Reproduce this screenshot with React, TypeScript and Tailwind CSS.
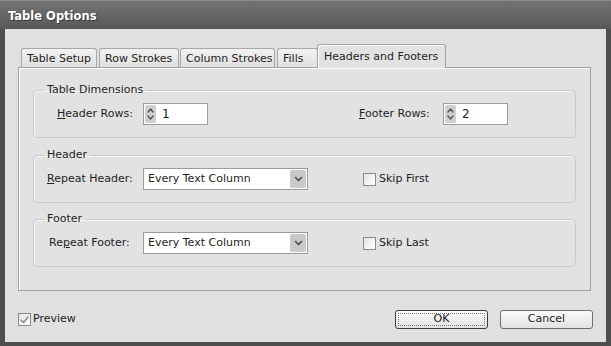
import React from 'react';

const Tab = ({ label, w, active = false, ml = 0 }: { label: string; w: number; active?: boolean; ml?: number }) => (
  <div
    style={{ width: w, marginLeft: ml }}
    className={
      active
        ? 'relative z-10 -mb-px h-[24px] rounded-t-[3px] border border-b-0 border-[#a2a2a2] bg-[#e2e2e2] shadow-[inset_1px_1px_0_#ffffff] pl-[6px] pt-[4px] text-[#1e1e1e]'
        : 'h-[19px] rounded-t-[3px] border border-b-0 border-[#a8a8a8] bg-gradient-to-b from-[#f2f2f2] to-[#e0e0e0] pl-[5px] pt-[2px] text-[#1e1e1e]'
    }
  >
    {label}
  </div>
);

const Spinner = ({ value }: { value: string }) => (
  <div className="flex h-[22px] w-[65px] items-center border border-[#9c9c9c] bg-white pl-[1px]">
    <div className="flex h-[18px] w-[11px] flex-col items-center justify-center rounded-[2px] bg-[#cfcfcf]">
      <svg width="9" height="16" viewBox="0 0 9 16" fill="none" stroke="#555" strokeWidth="1.4" strokeLinecap="round" strokeLinejoin="round">
        <path d="M2 6 L4.5 3 L7 6" />
        <path d="M2 10 L4.5 13 L7 10" />
      </svg>
    </div>
    <span className="ml-[6px] text-[12px]">{value}</span>
  </div>
);

const Select = () => (
  <div className="flex h-[22px] w-[165px] items-center border border-[#9c9c9c] bg-white">
    <span className="flex-1 pl-[4px] text-[11px]">Every Text Column</span>
    <div className="mr-[1px] flex h-[18px] w-[16px] items-center justify-center rounded-[2px] bg-[#c9c9c9]">
      <svg width="9" height="6" viewBox="0 0 9 6" fill="none" stroke="#4a4a4a" strokeWidth="1.6" strokeLinecap="round" strokeLinejoin="round">
        <path d="M1.5 1.5 L4.5 4.5 L7.5 1.5" />
      </svg>
    </div>
  </div>
);

const Check = ({ checked = false }: { checked?: boolean }) => (
  <div className="flex h-[13px] w-[13px] items-center justify-center border border-[#8a8a8a] bg-gradient-to-br from-[#e4e4e4] to-[#ffffff]">
    {checked && (
      <svg width="9" height="8" viewBox="0 0 9 8" fill="none" stroke="#8a8a8a" strokeWidth="1.6" strokeLinecap="round" strokeLinejoin="round">
        <path d="M1 4 L3.5 6.5 L8 1" />
      </svg>
    )}
  </div>
);

const Group = ({ title, children, className = '' }: { title: string; children: React.ReactNode; className?: string }) => (
  <fieldset className={`rounded-[4px] border border-[#cbcbcb] shadow-[inset_1px_1px_0_#f4f4f4] ${className}`}>
    <legend className="ml-[10px] px-[3px] leading-[14px]">{title}</legend>
    {children}
  </fieldset>
);

export default function App() {
  return (
    <div className="flex h-[346px] w-[611px] flex-col bg-[#4e4e4e] px-[5px] pb-[4px] font-['DejaVu_Sans',sans-serif] text-[11px] text-[#1e1e1e]">
      {/* Title bar */}
      <div className="-mx-[5px] flex h-[29px] items-center border-t border-[#8a8a8a] bg-gradient-to-b from-[#737373] to-[#585858] pl-[8px] pt-[4px] text-[11.5px] font-bold text-white [text-shadow:1px_1px_0_#3a3a3a]">
        Table Options
      </div>

      <div className="flex flex-1 flex-col bg-[#e0e0e0] pl-[13px] pr-[13px]">
        {/* Tabs */}
        <div className="mt-[15px] flex items-end pl-[3px]">
          <Tab label="Table Setup" w={76} />
          <Tab label="Row Strokes" w={80} ml={2} />
          <Tab label="Column Strokes" w={95} ml={1} />
          <Tab label="Fills" w={41} ml={2} />
          <Tab label="Headers and Footers" w={129} active ml={-1} />
        </div>

        {/* Panel */}
        <div className="mr-[2px] flex h-[224px] flex-col border border-[#a2a2a2] bg-[#e2e2e2] px-[14px] pt-[15px] shadow-[inset_1px_1px_0_#ffffff]">
          <Group title="Table Dimensions">
            <div className="flex items-center pl-[23px] pt-[6px] pb-[12px]">
              <span className="w-[86px]"><u>H</u>eader Rows:</span>
              <Spinner value="1" />
              <span className="ml-[151px] w-[84px]"><u>F</u>ooter Rows:</span>
              <Spinner value="2" />
            </div>
          </Group>

          <Group title="Header" className="mt-[10px]">
            <div className="flex items-center pl-[13px] pt-[6px] pb-[12px]">
              <span className="w-[96px]"><u>R</u>epeat Header:</span>
              <Select />
              <div className="ml-[55px] flex items-center gap-[3px]">
                <Check />
                <span>Skip First</span>
              </div>
            </div>
          </Group>

          <Group title="Footer" className="mt-[9px]">
            <div className="flex items-center pl-[15px] pt-[6px] pb-[12px]">
              <span className="w-[94px]">Re<u>p</u>eat Footer:</span>
              <Select />
              <div className="ml-[55px] flex items-center gap-[3px]">
                <Check />
                <span>Skip Last</span>
              </div>
            </div>
          </Group>
        </div>

        {/* Bottom row */}
        <div className="mt-[19px] flex items-center">
          <div className="flex items-center gap-[2px]">
            <Check checked />
            <span>Preview</span>
          </div>
          <div className="ml-auto flex gap-[12px]">
            <button className="flex h-[19px] w-[93px] items-center justify-center rounded-[3px] border border-[#3c3c3c] bg-gradient-to-b from-[#fbfbfb] to-[#e2e2e2] p-[2px] text-[11px]">
              <span className="flex h-full w-full items-center justify-center border border-dotted border-[#777]">OK</span>
            </button>
            <button className="flex h-[19px] w-[93px] items-center justify-center rounded-[3px] border border-[#6e6e6e] bg-gradient-to-b from-[#fbfbfb] to-[#e2e2e2] text-[11px]">
              Cancel
            </button>
          </div>
        </div>
      </div>
    </div>
  );
}
